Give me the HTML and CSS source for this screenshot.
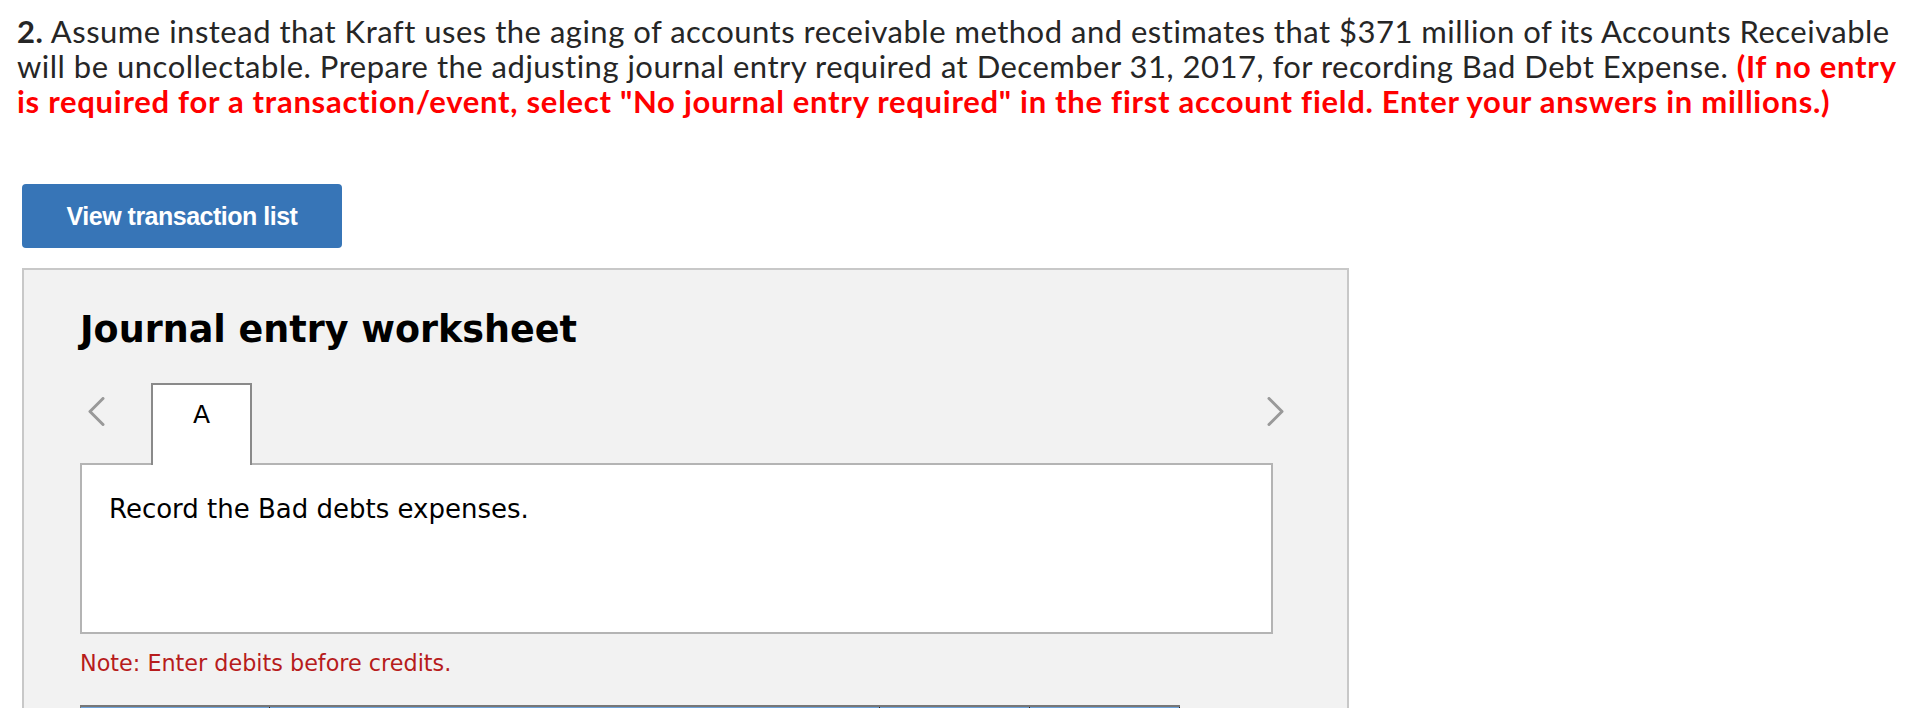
FILE: index.html
```html
<!DOCTYPE html>
<html lang="en">
<head>
<meta charset="utf-8">
<title>Journal entry worksheet</title>
<link rel="stylesheet" href="styles.css">
</head>
<body>
<main class="page">
  <p class="question"><b class="qnum">2.</b> Assume instead that Kraft uses the aging of accounts receivable method and estimates that $371 million of its Accounts Receivable will be uncollectable. Prepare the adjusting journal entry required at December 31, 2017, for recording Bad Debt Expense. <span class="warn">(If no entry is required for a transaction/event, select "No journal entry required" in the first account field. Enter your answers in millions.)</span></p>

  <button class="btn" type="button">View transaction list</button>

  <section class="worksheet">
    <h2 class="ws-title">Journal entry worksheet</h2>

    <div class="ws-nav">
      <span class="chev chev-left" aria-label="previous">
        <svg width="17" height="29" viewBox="0 0 17 29"><polyline points="15,1.5 2,14.5 15,27.5" fill="none" stroke="#999" stroke-width="3" stroke-linecap="round" stroke-linejoin="round"/></svg>
      </span>
      <div class="tab">A</div>
      <span class="chev chev-right" aria-label="next">
        <svg width="17" height="29" viewBox="0 0 17 29"><polyline points="2,1.5 15,14.5 2,27.5" fill="none" stroke="#999" stroke-width="3" stroke-linecap="round" stroke-linejoin="round"/></svg>
      </span>
    </div>

    <div class="ws-panel">
      <p class="ws-desc">Record the Bad debts expenses.</p>
    </div>

    <p class="ws-note">Note: Enter debits before credits.</p>

    <div class="ws-table">
      <div class="th th-first"></div>
      <div class="th"></div>
      <div class="th"></div>
      <div class="th"></div>
    </div>
  </section>
</main>
</body>
</html>
```

FILE: styles.css
```css
html, body {
  margin: 0;
  padding: 0;
  background: #ffffff;
  overflow: hidden;
}

.page {
  padding: 14px 17px 40px 17px;
}

.question {
  margin: 0;
  font-family: "Lato", "Liberation Sans", sans-serif;
  font-size: 31px;
  line-height: 35px;
  letter-spacing: 0.5px;
  color: #262626;
}

.qnum {
  font-weight: 700;
}

.warn {
  color: #ff0000;
  font-weight: 700;
  letter-spacing: 0.72px;
}

.btn {
  display: flex;
  align-items: center;
  justify-content: center;
  margin: 65px 0 0 5px;
  width: 320px;
  height: 64px;
  padding: 0;
  border: none;
  border-radius: 4px;
  background: #3775b7;
  color: #ffffff;
  font-family: "Liberation Sans", Arial, sans-serif;
  font-weight: 700;
  font-size: 25px;
  letter-spacing: -0.5px;
}

.worksheet {
  margin: 20px 0 0 5px;
  width: 1327px;
  box-sizing: border-box;
  border: 2px solid #c8c8c8;
  background: #f2f2f2;
  padding: 39px 74px 60px 56px;
  font-family: "DejaVu Sans", Verdana, sans-serif;
}

.ws-title {
  margin: 0;
  font-size: 36.5px;
  line-height: 42px;
  font-weight: 700;
  color: #000000;
}

.ws-nav {
  display: flex;
  align-items: flex-start;
  margin-top: 32px;
}

.chev {
  display: flex;
  margin-top: 14px;
}

.chev-left {
  margin-left: 8px;
}

.chev-right {
  margin-left: auto;
  margin-right: -11px;
}

.tab {
  position: relative;
  z-index: 1;
  margin-left: 46px;
  margin-bottom: -2px;
  width: 101px;
  height: 82px;
  box-sizing: border-box;
  border: 2px solid #8a8a8a;
  border-bottom: none;
  background: #ffffff;
  padding-top: 15px;
  text-align: center;
  font-size: 25px;
  color: #000000;
}

.ws-panel {
  height: 171px;
  box-sizing: border-box;
  border: 2px solid #b4b4b4;
  background: #ffffff;
  padding: 29px 27px;
}

.ws-desc {
  margin: 0;
  font-size: 26px;
  color: #000000;
}

.ws-note {
  margin: 16px 0 0 0;
  font-size: 22.3px;
  color: #b71c1c;
}

.ws-table {
  display: grid;
  grid-template-columns: 189px 610px 150px 150px;
  width: 1099px;
  margin-top: 29px;
  border-top: 2px solid #777777;
  border-left: 1px solid #777777;
}

.th {
  height: 50px;
  background: #6fa4dc;
  border-right: 1px solid #222222;
}
```
